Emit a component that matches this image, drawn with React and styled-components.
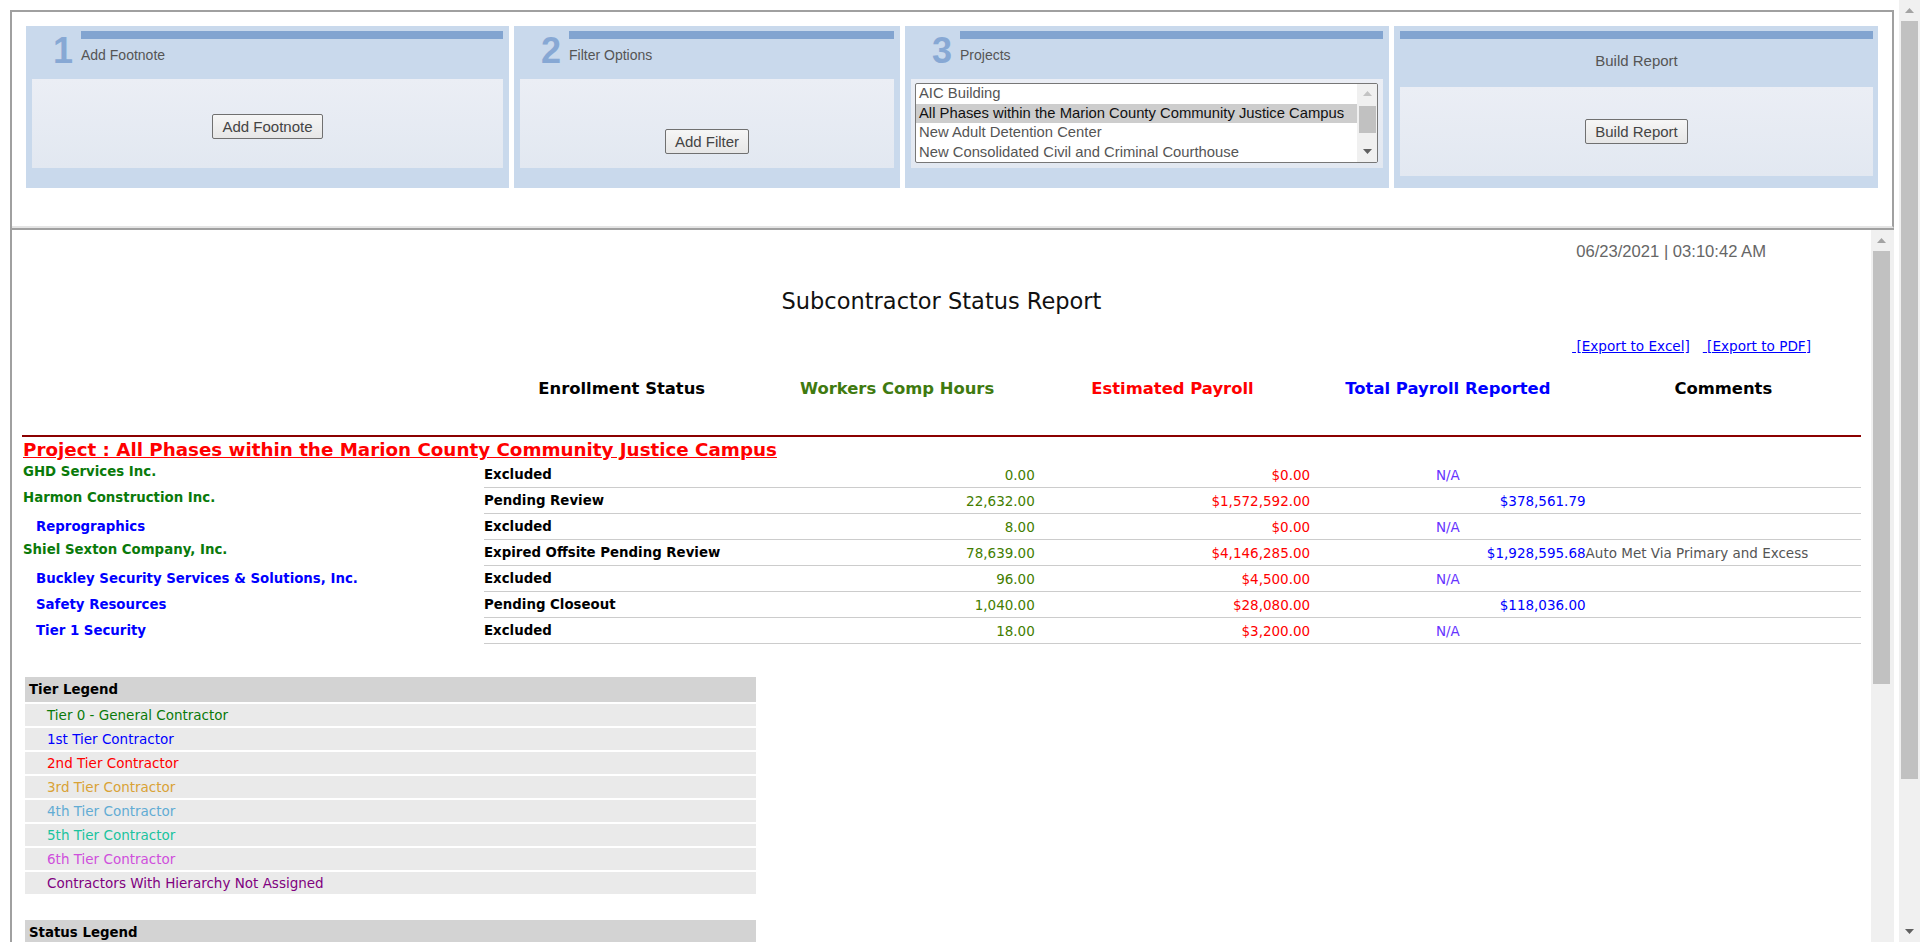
import React from 'react';
import styled, { createGlobalStyle } from 'styled-components';

const GlobalStyle = createGlobalStyle`
	html, body {
		margin: 0;
		padding: 0;
		overflow: hidden;
		background: #fff;
	}
	#root {
		height: 942px;
	}
`;

const Page = styled.div`
	display: flex;
	width: 1920px;
	height: 942px;
	background: #fff;
`;

const Main = styled.div`
	flex: 1;
	min-width: 0;
	padding: 10px 0 0 10px;
`;

const Shell = styled.div`
	width: 1884px;
	height: 932px;
	box-sizing: border-box;
	border-left: 2px solid #a0a0a0;
	border-top: 2px solid #a0a0a0;
	display: flex;
	flex-direction: column;
`;

/* ---------- wizard steps on top ---------- */

const Toolbar = styled.div`
	flex: none;
	height: 216px;
	box-sizing: border-box;
	padding: 14px 14px 0 14px;
	border-right: 2px solid #a0a0a0;
	border-bottom: 2px solid #e4e4e4;
	display: flex;
	gap: 5px;
	align-items: flex-start;
	font-family: 'Liberation Sans', Arial, sans-serif;
`;

const Step = styled.div`
	width: ${(p) => p.$w}px;
	height: 162px;
	box-sizing: border-box;
	background: #c9d9ec;
	padding: 5px ${(p) => p.$pr || 6}px 0 6px;
	display: flex;
	flex-direction: column;
`;

const StepHead = styled.div`
	display: flex;
	height: ${(p) => p.$h || 48}px;
`;

const StepNum = styled.div`
	width: 49px;
	flex: none;
	box-sizing: border-box;
	padding: 2px 8px 0 0;
	text-align: right;
	font-size: 36px;
	font-weight: bold;
	line-height: 36px;
	color: #87a8d4;
`;

const StepTitle = styled.div`
	flex: 1;
	display: flex;
	flex-direction: column;
`;

const StepBar = styled.div`
	height: 8px;
	background: #82a4d0;
`;

const StepLabel = styled.div`
	margin-top: ${(p) => (p.$center ? 13 : 8)}px;
	font-size: ${(p) => (p.$center ? 15 : 14)}px;
	line-height: ${(p) => (p.$center ? 17 : 16)}px;
	text-align: ${(p) => (p.$center ? 'center' : 'left')};
	color: #555;
`;

const StepBox = styled.div`
	height: 89px;
	box-sizing: border-box;
	background: linear-gradient(#ebeef5, #e2e8f1);
	display: flex;
	flex-direction: column;
	align-items: center;
	justify-content: ${(p) => p.$justify || 'center'};
	padding: ${(p) => p.$pad || '0'};
`;

const Button = styled.button`
	font-family: 'Liberation Sans', Arial, sans-serif;
	font-size: 15px;
	line-height: 17px;
	color: #444;
	height: 25px;
	padding: 0 9px;
	background: linear-gradient(#f6f6f6, #e6e6e6);
	border: 1px solid #707070;
	border-radius: 2px;
`;

const ListBox = styled.div`
	align-self: stretch;
	margin: 4px 5px 0 4px;
	height: 80px;
	box-sizing: border-box;
	border: 1px solid #777;
	border-radius: 2px;
	background: #fff;
	display: flex;
	overflow: hidden;
`;

const ListItems = styled.div`
	flex: 1;
	min-width: 0;
`;

const ListItem = styled.div`
	height: 19.5px;
	line-height: 18.5px;
	padding-left: 3px;
	font-size: 14.8px;
	white-space: nowrap;
	overflow: hidden;
	color: ${(p) => (p.$sel ? '#111' : '#555')};
	background: ${(p) => (p.$sel ? '#cdcdcd' : 'transparent')};
`;

const ListScroll = styled.div`
	width: 20px;
	flex: none;
	background: #f0f0f0;
	display: flex;
	flex-direction: column;
	align-items: center;
`;

const ListThumb = styled.div`
	width: 17px;
	height: 28px;
	margin: 2px 0 7px;
	background: #c1c1c1;
`;

const ArrowBtn = styled.div`
	height: ${(p) => p.$h}px;
	display: flex;
	align-items: center;
	justify-content: center;
`;

/* ---------- report frame ---------- */

const Frame = styled.div`
	flex: 1;
	min-height: 0;
	border-top: 2px solid #a0a0a0;
	display: flex;
	overflow: hidden;
`;

const Report = styled.div`
	flex: 1;
	min-width: 0;
	padding: 0 10px;
	overflow: hidden;
	font-family: 'DejaVu Sans', Verdana, sans-serif;
	color: #000;
`;

const FrameScroll = styled.div`
	width: 23px;
	flex: none;
	background: #f0f0f0;
	display: flex;
	flex-direction: column;
	padding-right: 2px;
	box-sizing: border-box;
	align-items: center;
`;

const FrameThumb = styled.div`
	width: 17px;
	height: 433px;
	background: #c1c1c1;
`;

const Stamp = styled.div`
	padding: 13px 95px 0 0;
	text-align: right;
	font-family: 'Liberation Sans', Arial, sans-serif;
	font-size: 16.6px;
	line-height: 18px;
	color: #666;
`;

const Title = styled.div`
	margin-top: 27px;
	text-align: center;
	font-size: 22.5px;
	line-height: 26px;
	color: #111;
`;

const Exports = styled.div`
	margin-top: 24px;
	padding-right: 50px;
	text-align: right;
	font-size: 13.6px;
	line-height: 16px;
	white-space: pre;
`;

const ExportLink = styled.a`
	color: #00f;
	text-decoration: underline;
	cursor: pointer;
`;

const Grid = styled.div`
	display: grid;
	grid-template-columns: 462px repeat(5, 1fr);
`;

const HeadRow = styled(Grid)`
	margin-top: 25px;
	height: 20px;
	align-items: center;
`;

const HeadCell = styled.div`
	text-align: center;
	font-size: 16.4px;
	font-weight: bold;
	line-height: 20px;
	color: ${(p) => p.$c};
`;

const Rule = styled.div`
	margin-top: 36px;
	height: 2px;
	background: #8b0000;
`;

const ProjectTitle = styled.a`
	display: block;
	margin: 2px 0 1px;
	font-size: 18.3px;
	font-weight: bold;
	line-height: 22px;
	color: #f00;
	text-decoration: underline;
	padding-left: 1px;
`;

const DataRow = styled(Grid)`
	height: 26px;
`;

const NameCell = styled.div`
	font-size: 13.33px;
	font-weight: bold;
	line-height: 16px;
	white-space: nowrap;
	color: ${(p) => (p.$tier === 0 ? '#0a7a0a' : '#00f')};
	padding: ${(p) => (p.$tier === 0 ? '2px 0 0 1px' : '0 0 0 14px')};
	display: flex;
	align-items: ${(p) => (p.$tier === 0 ? 'flex-start' : 'center')};
`;

const Cell = styled.div`
	border-bottom: 1px solid #ccc;
	display: flex;
	align-items: center;
	justify-content: ${(p) => p.$j || 'flex-start'};
	white-space: nowrap;
	font-size: ${(p) => (p.$bold ? '13.33px' : '13.5px')};
	font-weight: ${(p) => (p.$bold ? 'bold' : 'normal')};
	color: ${(p) => p.$c || '#000'};
`;

const Legend = styled.div`
	width: 731px;
	margin: ${(p) => p.$mt}px 0 0 3px;
	display: flex;
	flex-direction: column;
	gap: 2px;
`;

const LegendHead = styled.div`
	height: 25px;
	background: #d3d3d3;
	padding-left: 4px;
	display: flex;
	align-items: center;
	font-size: 13.33px;
	font-weight: bold;
`;

const LegendRow = styled.div`
	height: 22px;
	background: #eaeaea;
	padding-left: 22px;
	display: flex;
	align-items: center;
	font-size: 13.5px;
	color: ${(p) => p.$c};
`;

/* ---------- page scrollbar ---------- */

const PageScroll = styled.div`
	width: 21px;
	flex: none;
	height: 942px;
	background: #f0f0f0;
	display: flex;
	flex-direction: column;
	align-items: center;
`;

const PageThumb = styled.div`
	width: 17px;
	height: 758px;
	background: #c1c1c1;
`;

const Spacer = styled.div`
	flex: 1;
`;

const Arrow = ({ down, color = '#a3a3a3' }) => (
	<svg width="9" height="5" viewBox="0 0 9 5">
		<polygon points={down ? '0,0 9,0 4.5,5' : '0,5 9,5 4.5,0'} fill={color} />
	</svg>
);

const projects = [
	'AIC Building',
	'All Phases within the Marion County Community Justice Campus',
	'New Adult Detention Center',
	'New Consolidated Civil and Criminal Courthouse'
];

const rows = [
	{ name: 'GHD Services Inc.', tier: 0, status: 'Excluded', hours: '0.00', est: '$0.00', total: null },
	{ name: 'Harmon Construction Inc.', tier: 0, status: 'Pending Review', hours: '22,632.00', est: '$1,572,592.00', total: '$378,561.79' },
	{ name: 'Reprographics', tier: 1, status: 'Excluded', hours: '8.00', est: '$0.00', total: null },
	{
		name: 'Shiel Sexton Company, Inc.',
		tier: 0,
		status: 'Expired Offsite Pending Review',
		hours: '78,639.00',
		est: '$4,146,285.00',
		total: '$1,928,595.68',
		comment: 'Auto Met Via Primary and Excess'
	},
	{ name: 'Buckley Security Services & Solutions, Inc.', tier: 1, status: 'Excluded', hours: '96.00', est: '$4,500.00', total: null },
	{ name: 'Safety Resources', tier: 1, status: 'Pending Closeout', hours: '1,040.00', est: '$28,080.00', total: '$118,036.00' },
	{ name: 'Tier 1 Security', tier: 1, status: 'Excluded', hours: '18.00', est: '$3,200.00', total: null }
];

const tiers = [
	['Tier 0 - General Contractor', '#0a7a0a'],
	['1st Tier Contractor', '#0000ff'],
	['2nd Tier Contractor', '#ff0000'],
	['3rd Tier Contractor', '#d9a236'],
	['4th Tier Contractor', '#62acd4'],
	['5th Tier Contractor', '#1cc39e'],
	['6th Tier Contractor', '#cf4fdc'],
	['Contractors With Hierarchy Not Assigned', '#800080']
];

const GREEN = '#437d00';

const App = () => (
	<Page>
		<GlobalStyle />
		<Main>
			<Shell>
				<Toolbar>
					<Step $w={483}>
						<StepHead>
							<StepNum>1</StepNum>
							<StepTitle>
								<StepBar />
								<StepLabel>Add Footnote</StepLabel>
							</StepTitle>
						</StepHead>
						<StepBox $pad="6px 0 0 0">
							<Button>Add Footnote</Button>
						</StepBox>
					</Step>

					<Step $w={386}>
						<StepHead>
							<StepNum>2</StepNum>
							<StepTitle>
								<StepBar />
								<StepLabel>Filter Options</StepLabel>
							</StepTitle>
						</StepHead>
						<StepBox $justify="flex-end" $pad="0 0 14px 0">
							<Button>Add Filter</Button>
						</StepBox>
					</Step>

					<Step $w={484}>
						<StepHead>
							<StepNum>3</StepNum>
							<StepTitle>
								<StepBar />
								<StepLabel>Projects</StepLabel>
							</StepTitle>
						</StepHead>
						<StepBox $justify="flex-start">
							<ListBox>
								<ListItems>
									{projects.map((p, i) => (
										<ListItem key={p} $sel={i === 1}>
											{p}
										</ListItem>
									))}
								</ListItems>
								<ListScroll>
									<ArrowBtn $h={20}>
										<Arrow color="#c3c3c3" />
									</ArrowBtn>
									<ListThumb />
									<ArrowBtn $h={22}>
										<Arrow down color="#606060" />
									</ArrowBtn>
								</ListScroll>
							</ListBox>
						</StepBox>
					</Step>

					<Step $w={484} $pr={5}>
						<StepHead $h={56}>
							<StepTitle>
								<StepBar />
								<StepLabel $center>Build Report</StepLabel>
							</StepTitle>
						</StepHead>
						<StepBox>
							<Button>Build Report</Button>
						</StepBox>
					</Step>
				</Toolbar>

				<Frame>
					<Report>
						<Stamp>06/23/2021 | 03:10:42 AM</Stamp>
						<Title>Subcontractor Status Report</Title>
						<Exports>
							<ExportLink>{'\u00a0[Export to Excel]'}</ExportLink>
							{'\u00a0\u00a0\u00a0'}
							<ExportLink>{'\u00a0[Export to PDF]'}</ExportLink>
						</Exports>

						<HeadRow>
							<div />
							<HeadCell $c="#000">Enrollment Status</HeadCell>
							<HeadCell $c="#3f7a10">Workers Comp Hours</HeadCell>
							<HeadCell $c="#f00">Estimated Payroll</HeadCell>
							<HeadCell $c="#00f">Total Payroll Reported</HeadCell>
							<HeadCell $c="#000">Comments</HeadCell>
						</HeadRow>

						<Rule />
						<ProjectTitle>Project : All Phases within the Marion County Community Justice Campus</ProjectTitle>

						{rows.map((r) => (
							<DataRow key={r.name}>
								<NameCell $tier={r.tier}>{r.name}</NameCell>
								<Cell $bold>{r.status}</Cell>
								<Cell $j="flex-end" $c={GREEN}>
									{r.hours}
								</Cell>
								<Cell $j="flex-end" $c="#f00">
									{r.est}
								</Cell>
								{r.total ? (
									<Cell $j="flex-end" $c="#00f">
										{r.total}
									</Cell>
								) : (
									<Cell $j="center" $c="#6633ff">
										N/A
									</Cell>
								)}
								<Cell $c="#555">{r.comment || ''}</Cell>
							</DataRow>
						))}

						<Legend $mt={33}>
							<LegendHead>Tier Legend</LegendHead>
							{tiers.map(([label, c]) => (
								<LegendRow key={label} $c={c}>
									{label}
								</LegendRow>
							))}
						</Legend>

						<Legend $mt={26}>
							<LegendHead>Status Legend</LegendHead>
						</Legend>
					</Report>
					<FrameScroll>
						<ArrowBtn $h={21}>
							<Arrow />
						</ArrowBtn>
						<FrameThumb />
					</FrameScroll>
				</Frame>
			</Shell>
		</Main>
		<PageScroll>
			<ArrowBtn $h={21}>
				<Arrow />
			</ArrowBtn>
			<PageThumb />
			<Spacer />
			<ArrowBtn $h={21}>
				<Arrow down color="#606060" />
			</ArrowBtn>
		</PageScroll>
	</Page>
);

export default App;
